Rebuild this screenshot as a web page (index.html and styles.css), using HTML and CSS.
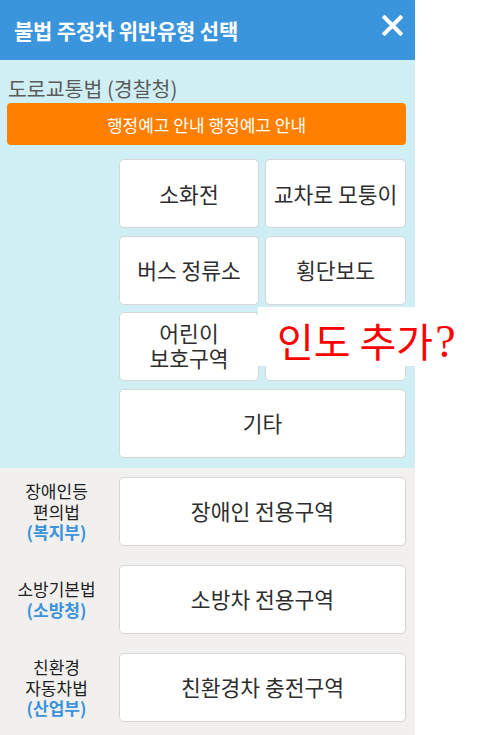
FILE: index.html
```html
<!DOCTYPE html>
<html>
<head>
	<meta charset="UTF-8"/>
	<link rel="stylesheet" href="styles.css">
</head>
<body>

<div class="app">
	<div class="header">
		<span class="header-title">불법 주정차 위반유형 선택</span>
		<svg class="close" width="21" height="21" viewBox="0 0 21 21">
			<path d="M2.5 2.5 L18.5 18.5 M18.5 2.5 L2.5 18.5" stroke="#fff" stroke-width="4" stroke-linecap="square"/>
		</svg>
	</div>

	<div class="police">
		<div class="law-title">도로교통법 (경찰청)</div>
		<div class="notice">행정예고 안내 행정예고 안내</div>
		<div class="grid">
			<div class="btn">소화전</div>
			<div class="btn">교차로 모퉁이</div>
			<div class="btn">버스 정류소</div>
			<div class="btn">횡단보도</div>
			<div class="btn two"><span>어린이</span><span>보호구역</span></div>
			<div class="btn"></div>
			<div class="btn wide">기타</div>
		</div>
	</div>

	<div class="others">
		<div class="row">
			<div class="label"><span>장애인등</span><span>편의법</span><b>(복지부)</b></div>
			<div class="btn">장애인 전용구역</div>
		</div>
		<div class="row">
			<div class="label"><span>소방기본법</span><b>(소방청)</b></div>
			<div class="btn">소방차 전용구역</div>
		</div>
		<div class="row">
			<div class="label"><span>친환경</span><span>자동차법</span><b>(산업부)</b></div>
			<div class="btn">친환경차 충전구역</div>
		</div>
	</div>

	<!--메모-->
	<div class="memo">인도 추가<span class="q">?</span></div>
</div>

</body>
</html>
```

FILE: styles.css
```css
*{
	margin:0;
	padding:0;
	box-sizing:border-box;
}
body{
	background-color:#fff;
	font-family:"Noto Sans CJK KR","Noto Sans",sans-serif;
}
.app{
	width:415px;
	position:relative;
}
.header{
	height:60px;
	background-color:#3a95dc;
	display:flex;
	align-items:center;
	justify-content:space-between;
	padding:0 12px 0 14px;
}
.header-title{
	color:#fff;
	font-size:21px;
	font-weight:bold;
	letter-spacing:-0.2px;
}
.close{
	display:block;
	margin-top:-10px;
}
.police{
	background-color:#cfeff4;
	padding:14px 9px 10px 7px;
}
.law-title{
	font-size:20.5px;
	line-height:28px;
	color:#5b5b5b;
	padding-left:1px;
	margin-bottom:1px;
}
.notice{
	height:42px;
	background-color:#ff8000;
	border-radius:4px;
	color:#fff;
	font-size:17px;
	display:flex;
	align-items:center;
	justify-content:center;
}
.grid{
	margin:14px 0 0 112px;
	display:grid;
	grid-template-columns:140px 141px;
	grid-auto-rows:69px;
	column-gap:6px;
	row-gap:7.6px;
}
.btn{
	background-color:#fff;
	border:1px solid #d6d6d6;
	border-radius:5px;
	color:#2e2e2e;
	font-size:21.5px;
	line-height:26px;
	display:flex;
	align-items:center;
	justify-content:center;
	text-align:center;
}
.btn.two{
	flex-direction:column;
	gap:1px;
	line-height:24px;
	padding-bottom:2px;
}
.btn.wide{
	grid-column:1 / 3;
}
.others{
	background-color:#f1f0ef;
	padding:9px 9px 14px 0;
}
.row{
	display:flex;
	align-items:center;
	gap:6px;
	margin-bottom:19px;
}
.row .btn{
	flex:1;
	height:69px;
}
.label{
	width:113px;
	display:flex;
	flex-direction:column;
	align-items:center;
	gap:1px;
	font-size:17px;
	line-height:19.5px;
	color:#222;
}
.label b{
	color:#3a93db;
}
.memo{
	position:absolute;
	left:258px;
	top:307px;
	width:200px;
	height:59px;
	background-color:#fff;
	color:#ff0000;
	font-size:40px;
	line-height:57px;
	padding:5px 0 0 19px;
	white-space:nowrap;
}
.memo .q{
	font-family:"Liberation Serif",serif;
	font-size:46px;
	margin-left:2px;
}
```
